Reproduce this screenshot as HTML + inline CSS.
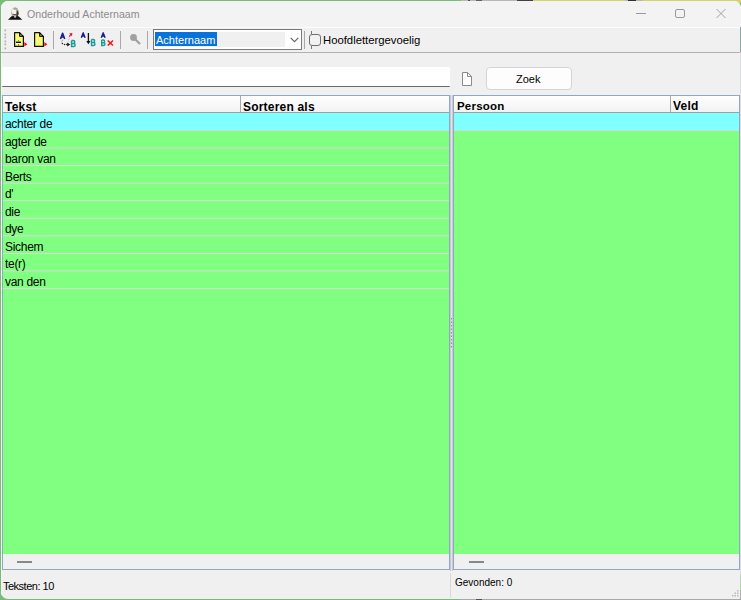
<!DOCTYPE html>
<html><head><meta charset="utf-8">
<style>
*{margin:0;padding:0;box-sizing:border-box}
html,body{width:741px;height:600px;overflow:hidden;background:#76be76;font-family:"Liberation Sans",sans-serif;color:#000}
.a{position:absolute}
.t{position:absolute;white-space:nowrap;line-height:12px;font-size:11px}
.b{font-weight:bold;letter-spacing:0.2px}
.rt{font-size:12px;letter-spacing:-0.3px}
.ln{position:absolute;left:3px;width:446px;height:1px;background:#d8d8d8}
svg{position:absolute;overflow:visible}
</style></head><body>
<!-- background strip top -->
<div class="a" style="left:461px;top:0;width:72px;height:1px;background:#b8b8b0"></div>
<div class="a" style="left:468px;top:0;width:2px;height:1px;background:#505050"></div>
<div class="a" style="left:476px;top:0;width:6px;height:1px;background:#606060"></div>
<div class="a" style="left:517px;top:0;width:16px;height:1px;background:#404048"></div>
<div class="a" style="left:533px;top:0;width:208px;height:3px;background:#d4d468"></div>
<div class="a" style="left:625px;top:0;width:18px;height:1px;background:#b8b8b0"></div>
<div class="a" style="left:628px;top:0;width:8px;height:1px;background:#303030"></div>

<!-- window -->
<div class="a" style="left:1px;top:1px;width:740px;height:598px;background:#f0f0f0;border-radius:7px 7px 2px 7px;overflow:hidden">
  <div class="a" style="left:0;top:0;width:740px;height:26px;background:#f3f3f3"></div>
  <div class="a" style="left:0;top:26px;width:740px;height:1px;background:#fcfcfc"></div>
  <div class="a" style="left:739px;top:26px;width:1px;height:25px;background:#8aa8a4"></div>
  <div class="a" style="left:739px;top:51px;width:1px;height:547px;background:#dcdce4"></div>
  <div class="a" style="left:0;top:1px;width:1px;height:596px;background:#f8f8fa"></div>
</div>

<!-- title icon -->
<svg style="left:7px;top:6px" width="16" height="15" viewBox="0 0 16 15">
  <ellipse cx="8" cy="6.5" rx="3.8" ry="5.3" fill="#a8a89c"/>
  <ellipse cx="7.3" cy="5.3" rx="2.6" ry="3" fill="#f4f4e4"/>
  <path d="M9.5 4 Q11.8 5 11.6 8 Q11 10.5 9 11 Q10 8 9.5 4 Z" fill="#3a3a34"/>
  <path d="M6 8.3 Q8 9.3 10 8" fill="none" stroke="#55554c" stroke-width="1"/>
  <rect x="6.5" y="2.5" width="3" height="1" fill="#777"/>
  <path d="M1 13.8 L4.5 10.2 L6.5 10 L8 11.5 L10 10 L11.5 10.2 L15.3 13.8 Z" fill="#111"/>
  <path d="M7 10.5 L8 12 L9.3 10.5 Z" fill="#e8e8e0"/>
</svg>
<div class="t" style="left:27px;top:8px;font-size:10.6px;color:#8c8c8c">Onderhoud Achternaam</div>

<!-- window controls -->
<div class="a" style="left:636px;top:13px;width:10px;height:1px;background:#999"></div>
<div class="a" style="left:675px;top:9px;width:10px;height:9px;border:1px solid #9a9a9a;border-radius:2px"></div>
<svg style="left:716px;top:9px" width="10" height="9" viewBox="0 0 10 9">
  <path d="M0.5 0 L9.5 9 M9.5 0 L0.5 9" stroke="#999" stroke-width="0.9"/>
</svg>

<!-- toolbar bottom line -->
<div class="a" style="left:1px;top:52px;width:739px;height:1px;background:#b0b0b0"></div>

<!-- grip -->
<svg style="left:4px;top:0px" width="3" height="52"><rect x="0.5" y="29.5" width="1.6" height="1.8" fill="#b0b0b0"/><rect x="0.5" y="33.5" width="1.6" height="1.8" fill="#b0b0b0"/><rect x="0.5" y="36.5" width="1.6" height="1.8" fill="#b0b0b0"/><rect x="0.5" y="40.5" width="1.6" height="1.8" fill="#b0b0b0"/><rect x="0.5" y="43.5" width="1.6" height="1.8" fill="#b0b0b0"/><rect x="0.5" y="47.5" width="1.6" height="1.8" fill="#b0b0b0"/></svg>

<!-- icon 1: new doc -->
<svg style="left:14px;top:32px" width="14" height="15" viewBox="0 0 14 15">
  <path d="M0.6 0.6 H5.6 L9.4 4.4 V14.4 H0.6 Z" fill="#fafa70" stroke="#111" stroke-width="1.2" stroke-linejoin="round"/>
  <path d="M5.6 0.6 L5.6 4.4 L9.4 4.4 Z" fill="#222" stroke="#111" stroke-width="1"/>
  <rect x="6.3" y="2.6" width="1.2" height="1.2" fill="#cfcf40"/>
  <rect x="2" y="9.6" width="5" height="1.4" fill="#111"/>
  <rect x="2" y="11" width="5" height="1" fill="#ffffff"/>
  <rect x="4" y="8" width="1" height="1.6" fill="#8a8a50"/>
  <rect x="4" y="12" width="1" height="2" fill="#8a8a50"/>
  <path d="M10.3 10 L13.4 12.2 L10.3 14.4 Z" fill="#e8102c"/>
</svg>
<!-- icon 2 -->
<svg style="left:34px;top:32px" width="14" height="15" viewBox="0 0 14 15">
  <path d="M0.6 0.6 H5.6 L9.4 4.4 V14.4 H0.6 Z" fill="#fafa70" stroke="#111" stroke-width="1.2" stroke-linejoin="round"/>
  <path d="M5.6 0.6 L5.6 4.4 L9.4 4.4 Z" fill="#222" stroke="#111" stroke-width="1"/>
  <rect x="6.3" y="2.6" width="1.2" height="1.2" fill="#cfcf40"/>
  <path d="M10.3 10 L13.4 12.2 L10.3 14.4 Z" fill="#e8102c"/>
</svg>
<!-- separators -->
<div class="a" style="left:53px;top:31px;width:1px;height:18px;background:#a8a8a8"></div>
<div class="a" style="left:120px;top:31px;width:1px;height:18px;background:#a8a8a8"></div>
<div class="a" style="left:147px;top:31px;width:1px;height:18px;background:#a8a8a8"></div>
<div class="a" style="left:304px;top:31px;width:1px;height:18px;background:#a8a8a8"></div>

<!-- icon 3: swap -->
<svg style="left:58px;top:31px" width="20" height="18" viewBox="0 0 20 18">
  <path d="M2.5 8 L4.6 2.3 L6.7 8 M3.2 6 H6" fill="none" stroke="#1c1c96" stroke-width="1.6" stroke-linejoin="round"/>
  <path d="M4.6 8.8 Q4.3 10.4 3.2 11" fill="none" stroke="#a0a0a0" stroke-width="1"/>
  <circle cx="4.4" cy="12.4" r="0.75" fill="#222"/>
  <circle cx="6.5" cy="13.5" r="0.75" fill="#222"/>
  <circle cx="8.5" cy="13.5" r="0.75" fill="#333"/>
  <path d="M9.2 11.4 L12.2 13.5 L9.2 15.6 Z" fill="#111"/>
  <circle cx="10.6" cy="10.2" r="0.55" fill="#f0a0b0"/>
  <circle cx="10.9" cy="8.6" r="0.55" fill="#f0a0b0"/>
  <circle cx="11.1" cy="7" r="0.55" fill="#f0a0b0"/>
  <path d="M11.3 5.6 L13 3.4" stroke="#e8102c" stroke-width="1.2"/>
  <path d="M11.2 2.4 L14.4 2 L14 5.2 Z" fill="#e8102c"/>
  <path d="M13.6 9.4 V15.6 H15.8 Q17.1 15.6 17.1 14 Q17.1 12.4 15.6 12.4 H13.6 M15.4 12.4 Q16.7 12.4 16.7 10.9 Q16.7 9.4 15.4 9.4 H13.6" fill="none" stroke="#1a9a9a" stroke-width="1.5"/>
</svg>
<!-- icon 4: A down B -->
<svg style="left:80px;top:32px" width="16" height="15" viewBox="0 0 16 15">
  <path d="M1.3 5.8 L3.2 0.9 L5.1 5.8 M1.9 4.1 H4.5" fill="none" stroke="#1c1c96" stroke-width="1.5" stroke-linejoin="round"/>
  <path d="M8.4 1 V10" stroke="#111" stroke-width="1.3"/>
  <path d="M6.3 9 L8.4 12.3 L10.5 9 Z" fill="#111"/>
  <path d="M11.5 7.5 V13.5 H13.5 Q15 13.5 15 12 Q15 10.5 13.5 10.5 H11.5 M13.3 10.5 Q14.6 10.5 14.6 9 Q14.6 7.5 13.3 7.5 H11.5" fill="none" stroke="#1a9a9a" stroke-width="1.4"/>
</svg>
<!-- icon 5: A B x -->
<svg style="left:100px;top:32px" width="15" height="15" viewBox="0 0 15 15">
  <path d="M1.3 5.8 L3.2 0.9 L5.1 5.8 M1.9 4.1 H4.5" fill="none" stroke="#1c1c96" stroke-width="1.5" stroke-linejoin="round"/>
  <path d="M1.7 8 V13.5 H3.5 Q5 13.5 5 12 Q5 10.7 3.5 10.7 H1.7 M3.3 10.7 Q4.6 10.7 4.6 9.3 Q4.6 8 3.3 8 H1.7" fill="none" stroke="#1a9a9a" stroke-width="1.4"/>
  <path d="M7.7 8.5 L13 13.5 M13 8.5 L7.7 13.5" stroke="#f01818" stroke-width="1.6"/>
</svg>
<!-- magnifier -->
<svg style="left:129px;top:33px" width="13" height="13" viewBox="0 0 13 13">
  <circle cx="4.5" cy="4.5" r="3.4" fill="#a0a0a0"/>
  <path d="M6.5 6.5 L11 11" stroke="#a0a0a0" stroke-width="2.2"/>
</svg>

<!-- combobox -->
<div class="a" style="left:153px;top:29px;width:149px;height:21px;background:#fff;border:1px solid #7a7a7a"></div>
<div class="a" style="left:155px;top:32px;width:130px;height:15px;background:#f0f0f0"></div>
<div class="a" style="left:155px;top:32px;width:62px;height:14px;background:#0a72d8"></div>
<div class="t" style="left:156px;top:34px;color:#fff">Achternaam</div>
<svg style="left:290px;top:37px" width="9" height="6" viewBox="0 0 9 6">
  <path d="M0.7 0.8 L4.5 4.6 L8.3 0.8" fill="none" stroke="#606060" stroke-width="1.1"/>
</svg>

<!-- checkbox -->
<div class="a" style="left:309px;top:34px;width:12px;height:12px;border:1px solid #6e6e6e;border-radius:3px;background:#f2f2f2"></div>
<div class="a" style="left:311px;top:31px;width:1px;height:3px;background:#777"></div>
<div class="a" style="left:311px;top:46px;width:1px;height:3px;background:#777"></div>
<div class="t" style="left:323px;top:34px;font-size:11.3px">Hoofdlettergevoelig</div>

<!-- search field -->
<div class="a" style="left:2px;top:67px;width:448px;height:20px;background:#fff;border-radius:0 2px 1px 1px;border-bottom:1px solid #6a6a6a"></div>
<!-- doc icon -->
<svg style="left:462px;top:72px" width="11" height="14" viewBox="0 0 11 14">
  <path d="M0.5 0.5 H5.5 L9.5 4.5 V13.5 H0.5 Z" fill="#fff" stroke="#8a8a8a" stroke-width="1"/>
  <path d="M5.5 0.5 V4.5 H9.5" fill="none" stroke="#8a8a8a" stroke-width="1"/>
</svg>
<!-- Zoek button -->
<div class="a" style="left:486px;top:67px;width:86px;height:23px;background:#fdfdfd;border:1px solid #d4d4d4;border-radius:4px"></div>
<div class="t" style="left:516px;top:73px">Zoek</div>

<!-- LEFT TABLE -->
<div class="a" style="left:2px;top:95px;width:448px;height:475px;border:1px solid #8fa8c4;background:#f0f0f0"></div>
<div class="a" style="left:3px;top:96px;width:446px;height:16px;background:linear-gradient(#ffffff,#f2f2f2)"></div>
<div class="a" style="left:3px;top:112px;width:446px;height:1px;background:#a0a0a0"></div>
<div class="a" style="left:240px;top:96px;width:1px;height:16px;background:#a8a8a8"></div>
<div class="t b" style="left:5px;top:101px;font-size:12px">Tekst</div>
<div class="t b" style="left:243px;top:101px;font-size:12px">Sorteren als</div>
<div class="a" style="left:3px;top:113px;width:446px;height:441px;background:#80ff80"></div>
<div class="a" style="left:3px;top:113px;width:446px;height:17px;background:#80ffff"></div>
<div class="ln" style="top:130px"></div>
<div class="ln" style="top:147px;opacity:0.45"></div>
<div class="ln" style="top:148px;opacity:0.55"></div>
<div class="ln" style="top:165px"></div>
<div class="ln" style="top:182px;opacity:0.35"></div>
<div class="ln" style="top:183px;opacity:0.65"></div>
<div class="ln" style="top:200px"></div>
<div class="ln" style="top:217px;opacity:0.25"></div>
<div class="ln" style="top:218px;opacity:0.75"></div>
<div class="ln" style="top:235px;opacity:0.70"></div>
<div class="ln" style="top:236px;opacity:0.30"></div>
<div class="ln" style="top:253px"></div>
<div class="ln" style="top:270px;opacity:0.60"></div>
<div class="ln" style="top:271px;opacity:0.40"></div>
<div class="ln" style="top:288px"></div>
<div class="t rt" style="left:5px;top:118px">achter de</div>
<div class="t rt" style="left:5px;top:136px">agter de</div>
<div class="t rt" style="left:5px;top:153px">baron van</div>
<div class="t rt" style="left:5px;top:171px">Berts</div>
<div class="t rt" style="left:5px;top:188px">d'</div>
<div class="t rt" style="left:5px;top:206px">die</div>
<div class="t rt" style="left:5px;top:223px">dye</div>
<div class="t rt" style="left:5px;top:241px">Sichem</div>
<div class="t rt" style="left:5px;top:258px">te(r)</div>
<div class="t rt" style="left:5px;top:276px">van den</div>
<div class="a" style="left:17px;top:561px;width:15px;height:2px;background:#888"></div>

<!-- splitter -->
<div class="a" style="left:450px;top:95px;width:3px;height:476px;background:#e4e4ea;border-left:1px solid #c8c8d0;border-right:1px solid #c8c8d0"></div>


<svg style="left:451px;top:318px" width="1" height="32"><rect x="0" y="0.0" width="1" height="1.4" fill="#8a8a8a"/><rect x="0" y="3.5" width="1" height="1.4" fill="#8a8a8a"/><rect x="0" y="7.0" width="1" height="1.4" fill="#8a8a8a"/><rect x="0" y="10.5" width="1" height="1.4" fill="#8a8a8a"/><rect x="0" y="14.0" width="1" height="1.4" fill="#8a8a8a"/><rect x="0" y="17.5" width="1" height="1.4" fill="#8a8a8a"/><rect x="0" y="21.0" width="1" height="1.4" fill="#8a8a8a"/><rect x="0" y="24.5" width="1" height="1.4" fill="#8a8a8a"/><rect x="0" y="28.0" width="1" height="1.4" fill="#8a8a8a"/></svg>
<!-- RIGHT TABLE -->
<div class="a" style="left:453px;top:95px;width:287px;height:475px;border:1px solid #8fa8c4;background:#f0f0f0"></div>
<div class="a" style="left:454px;top:96px;width:285px;height:16px;background:linear-gradient(#ffffff,#f2f2f2)"></div>
<div class="a" style="left:454px;top:112px;width:285px;height:1px;background:#a0a0a0"></div>
<div class="a" style="left:670px;top:96px;width:1px;height:16px;background:#a8a8a8"></div>
<div class="t b" style="left:457px;top:100px;font-size:11.5px">Persoon</div>
<div class="t b" style="left:673px;top:100px;font-size:12px">Veld</div>
<div class="a" style="left:454px;top:113px;width:285px;height:441px;background:#80ff80"></div>
<div class="a" style="left:454px;top:113px;width:285px;height:17px;background:#80ffff"></div>
<div class="a" style="left:454px;top:130px;width:285px;height:1px;background:#d8d8d8"></div>
<div class="a" style="left:469px;top:561px;width:15px;height:2px;background:#888"></div>

<!-- status bar -->
<div class="t" style="left:3px;top:580px;font-size:11px;letter-spacing:-0.5px">Teksten: 10</div>
<div class="a" style="left:450px;top:573px;width:1px;height:25px;background:#d8d8d8"></div>
<div class="t" style="left:455px;top:577px;font-size:10px">Gevonden: 0</div>
<!-- bottom strip -->
<div class="a" style="left:460px;top:599px;width:281px;height:1px;background:#a8a8a8"></div>
<div class="a" style="left:476px;top:599px;width:6px;height:1px;background:#505050"></div>
<div class="a" style="left:740px;top:575px;width:1px;height:15px;background:#b8d4b0"></div>
<div class="a" style="left:740px;top:590px;width:1px;height:10px;background:#b0b0b0"></div>
<!-- resize grip -->
<svg style="left:730px;top:589px" width="10" height="10">
  <rect x="7" y="1" width="1.5" height="1.5" fill="#b8b8b8"/>
  <rect x="4.5" y="3.5" width="1.5" height="1.5" fill="#b8b8b8"/>
  <rect x="7" y="3.5" width="1.5" height="1.5" fill="#b8b8b8"/>
  <rect x="2" y="6" width="1.5" height="1.5" fill="#b8b8b8"/>
  <rect x="4.5" y="6" width="1.5" height="1.5" fill="#b8b8b8"/>
  <rect x="7" y="6" width="1.5" height="1.5" fill="#b8b8b8"/>
</svg>
</body></html>
